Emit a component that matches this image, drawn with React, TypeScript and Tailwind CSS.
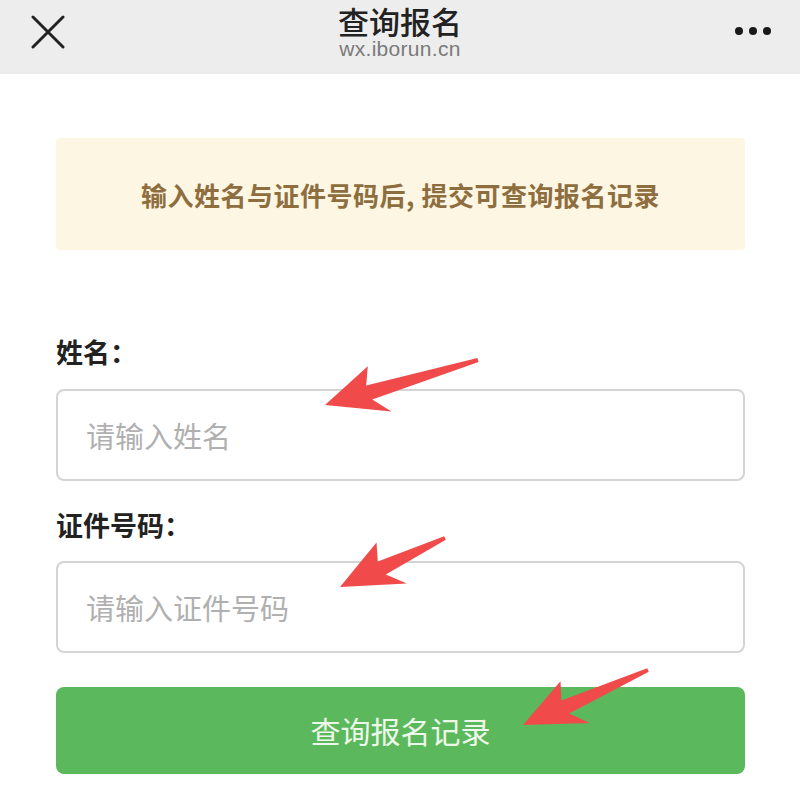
import React from 'react';

type Pt = [number, number];

// hand-drawn style red arrow, tip -> tail
function arrowPoints(tip: Pt, tail: Pt) {
  const dx = tail[0] - tip[0];
  const dy = tail[1] - tip[1];
  const len = Math.hypot(dx, dy);
  const ux = dx / len;
  const uy = dy / len;
  const nx = -uy;
  const ny = ux;
  const h = 60;
  const w = 25;
  const at = (a: number, b: number): string =>
    `${(tip[0] + ux * a + nx * b).toFixed(1)},${(tip[1] + uy * a + ny * b).toFixed(1)}`;
  return [
    at(0, 0),
    at(h - 8, -w),
    at(h * 0.75, -7),
    at(len, -2),
    at(len, 2),
    at(h * 0.78, 8),
    at(h + 2, w),
  ].join(' ');
}

const arrows: { tip: Pt; tail: Pt }[] = [
  { tip: [325, 405], tail: [478, 360] },
  { tip: [340, 587], tail: [445, 538] },
  { tip: [523, 725], tail: [648, 670] },
];

export default function App() {
  return (
    <div
      className="relative w-[800px] h-[793px] bg-white overflow-hidden"
      style={{ fontFamily: '"Noto Sans CJK SC", "Noto Sans", sans-serif' }}
    >
      {/* Top bar */}
      <div className="h-[74px] bg-[#ededed] grid grid-cols-[120px_1fr_120px] items-start">
        <div className="pl-[31px] pt-[15px]">
          <svg width="34" height="34" viewBox="0 0 34 34">
            <path d="M2 2 L32 32 M32 2 L2 32" stroke="#222" strokeWidth="3" strokeLinecap="round" />
          </svg>
        </div>
        <div className="flex flex-col items-center pt-[4px]">
          <div className="text-[31px] leading-[34px] text-[#222] font-medium">查询报名</div>
          <div
            className="text-[21px] leading-[22px] text-[#7a7a7a] tracking-[0.3px]"
            style={{ fontFamily: '"Liberation Sans", Arial, sans-serif' }}
          >
            wx.iborun.cn
          </div>
        </div>
        <div className="flex justify-end gap-[6px] pr-[29px] pt-[27px]">
          <span className="w-[8px] h-[8px] rounded-full bg-[#1a1a1a]" />
          <span className="w-[8px] h-[8px] rounded-full bg-[#1a1a1a]" />
          <span className="w-[8px] h-[8px] rounded-full bg-[#1a1a1a]" />
        </div>
      </div>

      {/* Content */}
      <div className="px-[56px] pr-[55px] pt-[64px]">
        <div className="h-[112px] rounded-[4px] bg-[#fdf6e3] flex items-center justify-center">
          <span className="text-[26px] font-bold text-[#8e6e3e] tracking-[0.5px]">
            输入姓名与证件号码后, 提交可查询报名记录
          </span>
        </div>

        <div className="mt-[83px] text-[27px] leading-[38px] font-bold text-[#222]">姓名：</div>
        <input
          className="mt-[18px] w-full h-[92px] rounded-[8px] border-2 border-[#d4d4d4] px-[28px] text-[29px] text-[#333] placeholder:text-[#b0b0b0] outline-none"
          placeholder="请输入姓名"
        />

        <div className="mt-[25px] text-[27px] leading-[38px] font-bold text-[#222]">证件号码：</div>
        <input
          className="mt-[17px] w-full h-[92px] rounded-[8px] border-2 border-[#d4d4d4] px-[28px] text-[29px] text-[#333] placeholder:text-[#b0b0b0] outline-none"
          placeholder="请输入证件号码"
        />

        <button className="mt-[34px] w-full h-[87px] rounded-[8px] bg-[#5cb85c] text-[30px] text-[#eef8ea]">
          查询报名记录
        </button>
      </div>

      {/* Annotation arrows */}
      <svg className="absolute inset-0 pointer-events-none" width="800" height="793">
        {arrows.map((a, i) => (
          <polygon key={i} points={arrowPoints(a.tip, a.tail)} fill="#f04a4a" />
        ))}
      </svg>
    </div>
  );
}
